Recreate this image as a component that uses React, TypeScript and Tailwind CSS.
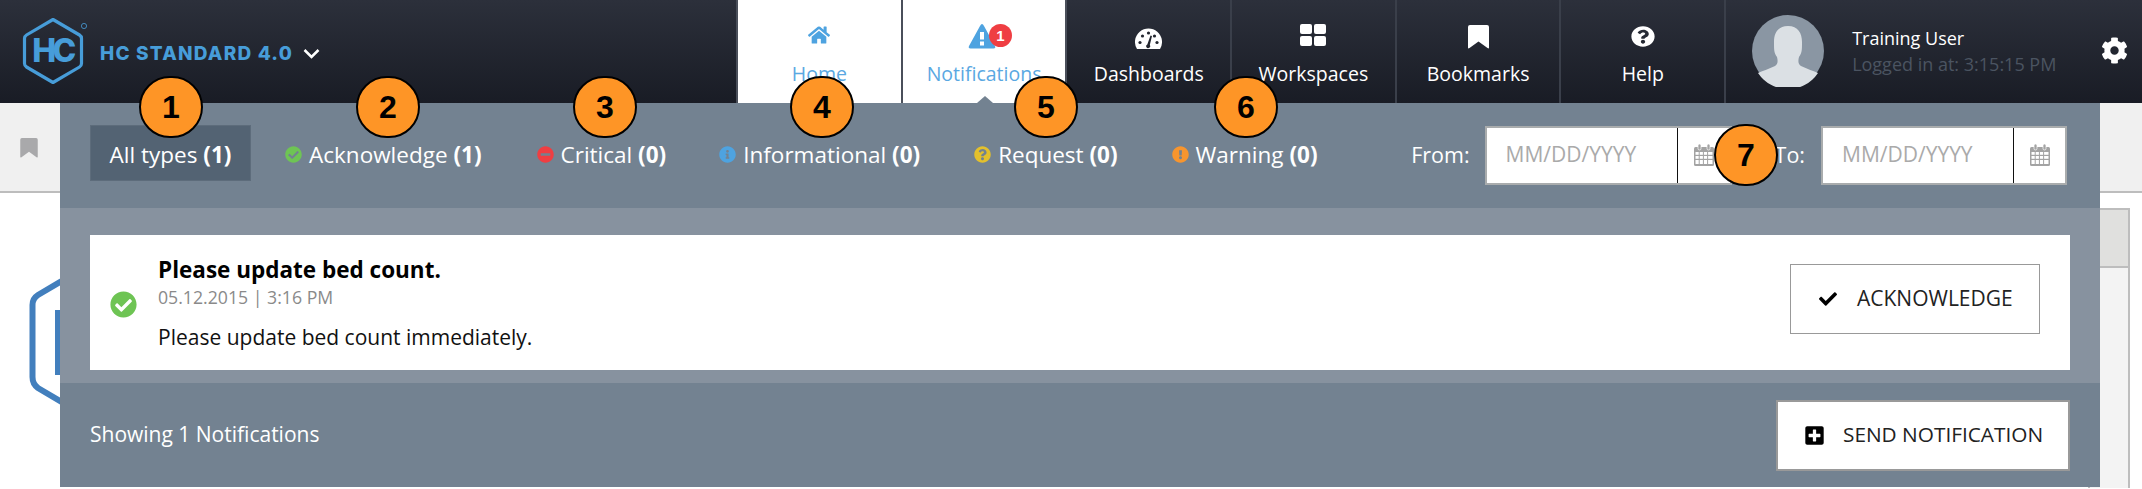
import React from "react";
import {
  FaCheck, FaCheckCircle, FaCog, FaExclamationCircle, FaHome,
  FaInfoCircle, FaMinusCircle, FaPlusSquare, FaQuestionCircle,
} from "react-icons/fa";

const sans = "font-['Open_Sans','Noto_Sans',sans-serif]";

function Logo() {
  return (
    <svg width="66" height="68" viewBox="0 0 66 68" className="shrink-0">
      <path d="M31 2.5 L57.5 18 Q59.5 19.2 59.5 21.5 V46.5 Q59.5 48.8 57.5 50 L31 65.5 L4.5 50 Q2.5 48.8 2.5 46.5 V21.5 Q2.5 19.2 4.5 18 Z" fill="none" stroke="#479dd9" strokeWidth="3.2" strokeLinejoin="round" />
      <text x="30.5" y="45" textAnchor="middle" fontFamily="Inter, sans-serif" fontWeight="800" fontSize="32" letterSpacing="-3.5" fill="#479dd9">HC</text>
      <circle cx="62" cy="9" r="2.6" fill="none" stroke="#479dd9" strokeWidth="0.8" />
    </svg>
  );
}

function AlertIcon() {
  return (
    <span className="relative ml-[8px] block h-[26px] w-[48px]">
      <svg width="28" height="26" viewBox="0 0 28 26" className="absolute left-[4px] top-0">
        <path d="M14 1 Q15 1 16 3 L27 23 Q28 25.500 25.500 25.500 H2.500 Q0 25.500 1 23 L12 3 Q13 1 14 1 Z" fill="#4ea3e0" />
        <rect x="12" y="9" width="4" height="7.500" fill="#fff" />
        <rect x="12" y="18.500" width="4" height="4" fill="#fff" />
      </svg>
      <span className="absolute left-[25px] top-[1px] flex h-[23px] w-[23px] items-center justify-center rounded-full bg-[#ef3e42] text-[15px] font-bold leading-none text-white font-['Liberation_Sans',sans-serif]">1</span>
    </span>
  );
}

function Gauge() {
  return (
    <svg width="27" height="21" viewBox="0 0 27 21">
      <path d="M2 21 A13.500 13.500 0 1 1 25 21 Z" fill="#fff" />
      <g fill="#23262f">
        <circle cx="5" cy="14.500" r="1.600" />
        <circle cx="7.500" cy="8" r="1.600" />
        <circle cx="13.500" cy="5" r="1.600" />
        <circle cx="22" cy="14.500" r="1.600" />
        <circle cx="19.500" cy="8" r="1.600" />
        <path d="M15.500 7.500 L17 8 L14.800 17 A2 2 0 1 1 12.300 16.400 Z" />
      </g>
    </svg>
  );
}

function Grid() {
  return (
    <svg width="26" height="22" viewBox="0 0 26 22" fill="#fff" className="mb-[3px]">
      <rect x="0" y="0" width="12" height="10" rx="2" />
      <rect x="14" y="0" width="12" height="10" rx="2" />
      <rect x="0" y="12" width="12" height="10" rx="2" />
      <rect x="14" y="12" width="12" height="10" rx="2" />
    </svg>
  );
}

function Bookmark({ w, h, fill }: { w: number; h: number; fill: string }) {
  return (
    <svg width={w} height={h} viewBox="0 0 21 24" fill={fill}>
      <path d="M2 0 H19 Q21 0 21 2 V22.500 Q21 24 19.500 23 L10.500 16.500 L1.500 23 Q0 24 0 22.500 V2 Q0 0 2 0 Z" />
    </svg>
  );
}

function Calendar() {
  return (
    <svg width="20" height="22" viewBox="0 0 20 22" fill="#a3a3a3">
      <path d="M1.500 3 H18.500 Q20 3 20 4.500 V20.500 Q20 22 18.500 22 H1.500 Q0 22 0 20.500 V4.500 Q0 3 1.500 3 Z" />
      <rect x="4" y="0" width="3" height="6" rx="1.500" stroke="#fff" strokeWidth="0.700" />
      <rect x="13" y="0" width="3" height="6" rx="1.500" stroke="#fff" strokeWidth="0.700" />
      <g fill="#fff">
        <rect x="1.500" y="8" width="3.200" height="2.800" />
        <rect x="5.700" y="8" width="3.200" height="2.800" />
        <rect x="9.900" y="8" width="3.200" height="2.800" />
        <rect x="14.100" y="8" width="4.400" height="2.800" />
        <rect x="1.500" y="12" width="3.200" height="2.800" />
        <rect x="5.700" y="12" width="3.200" height="2.800" />
        <rect x="9.900" y="12" width="3.200" height="2.800" />
        <rect x="14.100" y="12" width="4.400" height="2.800" />
        <rect x="1.500" y="16" width="3.200" height="4" />
        <rect x="5.700" y="16" width="3.200" height="4" />
        <rect x="9.900" y="16" width="3.200" height="4" />
        <rect x="14.100" y="16" width="4.400" height="4" />
      </g>
    </svg>
  );
}

function NavTab({ icon, label, active, pointer }: { icon: React.ReactNode; label: string; active?: boolean; pointer?: boolean }) {
  return (
    <div className={`relative flex h-full w-[164.7px] shrink-0 flex-col items-center border-r-2 ${active ? "bg-white text-[#5aa8e2] border-[#4a4f5a]" : "text-white border-[#3a3f4a]"}`}>
      <div className="flex h-[52px] items-end justify-center pb-[3px]">{icon}</div>
      <span className={`mt-[9px] text-[19.500px] leading-[26px] ${sans}`}>{label}</span>
      {pointer && <span className="absolute bottom-0 left-[74px] h-0 w-0 border-x-[8px] border-b-[7px] border-x-transparent border-b-[#738291]" />}
    </div>
  );
}

function Filter({ icon, label, count, color, className }: { icon?: React.ReactNode; label: string; count: number; color?: string; className?: string }) {
  return (
    <div className={`flex items-center pt-[3px] text-white text-[22.500px] ${sans} ${className ?? ""}`}>
      {icon && <span className={`mr-[7px] text-[17px] ${color}`}>{icon}</span>}
      <span>{label}&nbsp;<b className="font-bold">({count})</b></span>
    </div>
  );
}

function DateField({ className }: { className?: string }) {
  return (
    <div className={`flex h-[59px] border-2 border-[#a9acad] bg-white ${className ?? ""}`}>
      <div className={`flex w-[191px] items-center border-r border-[#111] pl-[19px] text-[21px] text-[#aaaaaa] ${sans}`}>MM/DD/YYYY</div>
      <div className="flex flex-1 items-center justify-center"><Calendar /></div>
    </div>
  );
}

function Marker({ n, x, y }: { n: number; x: number; y: number }) {
  return (
    <div
      className="absolute flex h-[62px] w-[64px] items-center justify-center rounded-full border-2 border-black bg-[#fe9526] text-[32px] font-bold text-black font-['Liberation_Sans',sans-serif]"
      style={{ left: x - 32, top: y - 31 }}
    >
      {n}
    </div>
  );
}

export default function App() {
  return (
    <div className={`relative flex h-[489px] w-[2142px] flex-col overflow-hidden bg-white ${sans}`}>
      <header className="flex h-[103px] shrink-0 bg-gradient-to-b from-[#2c303b] to-[#191c25]">
        <div className="flex w-[736px] shrink-0 items-start pl-[22px] pt-[17px]">
          <Logo />
          <span className="ml-[12px] mt-[23px] text-[19px] font-extrabold tracking-[1.200px] text-[#479dd9] font-['Inter',sans-serif]">HC STANDARD 4.0</span>
          <svg width="17" height="11" viewBox="0 0 17 11" className="ml-[10px] mt-[31px]"><path d="M1.500 2 L8.500 9 L15.500 2" fill="none" stroke="#fff" strokeWidth="2.500" /></svg>
        </div>
        <div className="flex h-full border-l-2 border-[#4a4f5a]">
          <NavTab active label="Home" icon={<FaHome className="mb-[3px] text-[22px] text-[#4ea3e0]" />} />
          <NavTab active pointer label="Notifications" icon={<AlertIcon />} />
          <NavTab label="Dashboards" icon={<Gauge />} />
          <NavTab label="Workspaces" icon={<Grid />} />
          <NavTab label="Bookmarks" icon={<Bookmark w={21} h={24} fill="#fff" />} />
          <NavTab label="Help" icon={<FaQuestionCircle className="mb-[2px] h-[21px] w-[24px]" preserveAspectRatio="none" />} />
        </div>
        <div className="flex flex-1 items-start pl-[26px] pt-[15px]">
          <svg width="72" height="72" viewBox="0 0 72 72" className="shrink-0">
            <circle cx="36" cy="36" r="36" fill="#8a96a3" />
            <path d="M36 11 C46 11 50 18 50 27 C50 35 50 38 47 42 C46 46 46 49 49 51 C55 54 62 56 66 58 A36 36 0 0 1 6 58 C10 56 17 54 23 51 C26 49 26 46 25 42 C22 38 22 35 22 27 C22 18 26 11 36 11 Z" fill="#dbe0e4" />
          </svg>
          <div className="ml-[28px] flex flex-col">
            <span className="mt-[10px] text-[18px] leading-[26px] text-white">Training User</span>
            <span className="text-[18px] leading-[26px] text-[#4b5461]">Logged in at: 3:15:15 PM</span>
          </div>
          <FaCog className="ml-auto mr-[14px] mt-[22px] text-[27px] text-white" />
        </div>
      </header>

      <div className="flex h-[90px] shrink-0 items-start border-b-2 border-[#bdbdbd] bg-[#f0f0f0] pl-[20px] pt-[35px]">
        <Bookmark w={18} h={20} fill="#a9a9ab" />
      </div>

      <div className="flex flex-1 justify-end pt-[15px]">
        <div className="mr-[12px] h-[280px] w-[42px] border-x-2 border-t-2 border-[#bdbdbd] bg-[#f3f3f3]">
          <div className="h-[58px] border-b-2 border-[#bdbdbd] bg-[#e0e0de]" />
        </div>
      </div>

      <svg width="60" height="150" viewBox="0 0 60 150" className="absolute left-0 top-[270px]">
        <path d="M72 5 L38 25 Q32.500 28.500 32.500 35 V107 Q32.500 114 38 118 L72 138" fill="none" stroke="#427fbd" strokeWidth="6" />
        <rect x="55" y="40" width="5" height="65" fill="#427fbd" />
      </svg>

      <section className="absolute left-[60px] top-[103px] flex h-[384px] w-[2040px] flex-col bg-[#738291]">
        <div className="flex h-[105px] shrink-0 items-start pl-[30px] pt-[22px]">
          <div className="flex h-[56px] w-[161px] items-center justify-center border border-[#5d6c7b] bg-[#536373]">
            <Filter label="All types" count={1} />
          </div>
          <div className="flex h-[56px] items-center">
            <Filter className="ml-[34px]" color="text-[#6ec454]" icon={<FaCheckCircle />} label="Acknowledge" count={1} />
            <Filter className="ml-[55px]" color="text-[#ef3e42]" icon={<FaMinusCircle />} label="Critical" count={0} />
            <Filter className="ml-[53px]" color="text-[#4ea3e0]" icon={<FaInfoCircle />} label="Informational" count={0} />
            <Filter className="ml-[54px]" color="text-[#e3c02c]" icon={<FaQuestionCircle />} label="Request" count={0} />
            <Filter className="ml-[54px]" color="text-[#f7952e]" icon={<FaExclamationCircle />} label="Warning" count={0} />
          </div>
          <div className={`ml-auto mr-[33px] flex h-[60px] items-center text-[21.500px] text-white ${sans}`}>
            <span className="mr-[15px]">From:</span>
            <DateField className="w-[247px]" />
            <span className="ml-[43px] mr-[16px]">To:</span>
            <DateField className="w-[246px]" />
          </div>
        </div>

        <div className="h-[175px] shrink-0 bg-[#87929f] px-[30px] pt-[27px]">
          <div className="flex h-[135px] items-center bg-white pl-[20px] pr-[30px]">
            <FaCheckCircle className="mt-[3px] shrink-0 text-[27px] text-[#6ec454]" />
            <div className="ml-[21px] flex flex-col">
              <span className="text-[22.500px] font-bold leading-[28px] text-black">Please update bed count.</span>
              <span className="mt-[1px] text-[17.700px] leading-[24px] text-[#8a8a8a]">05.12.2015 | 3:16 PM</span>
              <span className="mt-[15px] text-[21px] leading-[26px] text-[#111]">Please update bed count immediately.</span>
            </div>
            <button className="mb-[7px] ml-auto flex h-[70px] w-[250px] items-center border border-[#999] bg-white pl-[28px] text-[21px] text-[#222]">
              <FaCheck className="mr-[20px] text-[18px] text-black" />
              ACKNOWLEDGE
            </button>
          </div>
        </div>

        <div className="flex flex-1 items-center justify-between px-[30px]">
          <span className="text-[21px] text-white">Showing 1 Notifications</span>
          <button className="flex h-[71px] w-[294px] items-center border-2 border-[#999] bg-white pl-[26px] text-[20.800px] text-[#222]">
            <FaPlusSquare className="mr-[18px] text-[21px] text-black" />
            SEND NOTIFICATION
          </button>
        </div>
      </section>

      <Marker n={1} x={171} y={107} />
      <Marker n={2} x={388} y={107} />
      <Marker n={3} x={605} y={107} />
      <Marker n={4} x={822} y={107} />
      <Marker n={5} x={1046} y={107} />
      <Marker n={6} x={1246} y={107} />
      <Marker n={7} x={1746} y={155} />
    </div>
  );
}
